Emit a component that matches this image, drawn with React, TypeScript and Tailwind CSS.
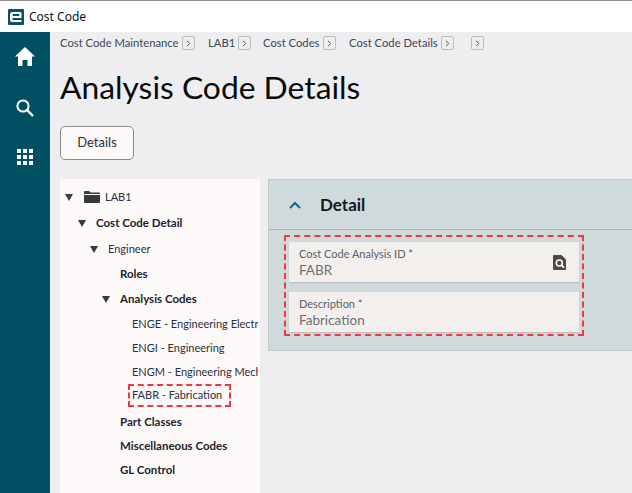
import React from 'react';

function Crumb({ label, gap }: { label: string; gap: string }) {
  return (
    <>
      <span className={`text-[11.25px] text-[#3c4650] ${gap}`}>{label}</span>
      <span className="ml-[5px] flex h-[14px] w-[13px] items-center justify-center rounded-[2px] border border-[#bcbcbc]">
        <svg width="5" height="7" viewBox="0 0 5 7" fill="none" stroke="#555" strokeWidth="1">
          <path d="M1 .8 3.8 3.5 1 6.2" />
        </svg>
      </span>
    </>
  );
}

function Caret() {
  return (
    <svg width="8" height="7" viewBox="0 0 8 7" className="shrink-0">
      <path d="M0 0h8L4 7z" fill="#3a3a3a" />
    </svg>
  );
}

function TreeRow({ height, indent, caret, bold, children }: { height: string; indent: string; caret?: boolean; bold?: boolean; children: React.ReactNode }) {
  return (
    <div className={`flex items-center overflow-hidden whitespace-nowrap ${height} ${indent} ${bold ? 'text-[11.5px] font-bold text-[#1d232b]' : 'text-[11px] text-[#2a3040]'}`}>
      {caret && <Caret />}
      {children}
    </div>
  );
}

function Field({ label, value, icon }: { label: string; value: string; icon?: boolean }) {
  return (
    <div className="flex h-10 items-center justify-between bg-[#f2efec] pl-[10px] pr-[13px] shadow-[0_1px_1px_#b9bfc1]">
      <div>
        <div className="text-[11px] leading-[15px] text-[#5c6068]">{label}</div>
        <div className="text-[13.5px] leading-[18px] text-[#6f6f6f]">{value}</div>
      </div>
      {icon && (
        <svg width="13" height="15" viewBox="0 0 13 15">
          <path d="M1 0h7.5L13 4.5V14a1 1 0 0 1-1 1H1a1 1 0 0 1-1-1V1a1 1 0 0 1 1-1z" fill="#4a4a4a" />
          <circle cx="6.3" cy="8" r="3" fill="none" stroke="#fff" strokeWidth="1.6" />
          <path d="M8.5 10.2 11 12.6" stroke="#fff" strokeWidth="1.8" />
        </svg>
      )}
    </div>
  );
}

export default function App() {
  return (
    <div className="flex h-[493px] w-[632px] flex-col overflow-hidden bg-[#eeeef0] font-['Lato','Noto_Sans',sans-serif]">
      {/* Title bar */}
      <div className="flex h-8 shrink-0 items-center border-t border-[#8c8c8c] bg-white pl-2">
        <svg width="16" height="16" viewBox="0 0 16 16">
          <rect width="16" height="16" rx="1" fill="#0b5163" />
          <path d="M4.500 3h7.500a1.500 1.500 0 0 1 1.500 1.500V9H4.500v2h9v2H4a2 2 0 0 1-2-2V5.500A2.500 2.500 0 0 1 4.500 3zm.2 2v2h6.500V5z" fill="#fff" fillRule="evenodd" />
        </svg>
        <span className="ml-[5px] font-['Noto_Sans',sans-serif] text-[12px] text-[#111]">Cost Code</span>
      </div>

      <div className="flex min-h-0 flex-1">
        {/* Side nav */}
        <div className="flex w-[50px] shrink-0 flex-col items-center bg-[#004f63]">
          <svg width="20" height="19" viewBox="0 0 20 19" className="mt-[15px]" fill="#fff">
            <path d="M10 0 20 9.500h-3V19h-4.500v-6h-5v6H3V9.500H0z" />
          </svg>
          <svg width="18" height="18" viewBox="0 0 18 18" fill="none" stroke="#fff" className="mt-[33px]">
            <circle cx="7" cy="7" r="5.600" strokeWidth="2" />
            <path d="M11 11l6 6" strokeWidth="2.400" />
          </svg>
          <div className="mt-[32px] grid grid-cols-3 gap-[2px]">
            {Array.from({ length: 9 }).map((_, i) => (
              <div key={i} className="h-[4px] w-[4px] bg-white" />
            ))}
          </div>
        </div>

        {/* Main */}
        <div className="min-w-0 flex-1">
          <div className="ml-[10px] mt-[4px] flex h-[14px] items-center whitespace-nowrap">
            <Crumb label="Cost Code Maintenance" gap="w-[117px]" />
            <Crumb label="LAB1" gap="ml-[13px] w-[25px]" />
            <Crumb label="Cost Codes" gap="ml-[12px] w-[55px]" />
            <Crumb label="Cost Code Details" gap="ml-[13px] w-[87px]" />
            <span className="ml-[17px] flex h-[14px] w-[13px] items-center justify-center rounded-[2px] border border-[#bcbcbc]">
              <svg width="5" height="7" viewBox="0 0 5 7" fill="none" stroke="#555" strokeWidth="1">
                <path d="M1 .8 3.8 3.5 1 6.2" />
              </svg>
            </span>
          </div>

          <h1 className="ml-[10px] mt-[15px] text-[31.8px] font-normal leading-[44px] text-[#0a0a0a]">Analysis Code Details</h1>

          <button className="ml-[10px] mt-[17px] block h-[34px] w-[74px] rounded-[5px] border border-[#8a8a8a] bg-[#fdf9f8] text-[13px] text-[#2a3040]">Details</button>

          <div className="ml-[10px] mt-[19px] flex items-start gap-2">
            {/* Tree */}
            <div className="h-[314px] w-[200px] shrink-0 bg-[#fdf9f8] pl-[5px] pr-[2px] pt-[5px]">
              <TreeRow height="h-[26px]" indent="ml-0" caret>
                <svg width="16" height="12" viewBox="0 0 16 12" className="ml-[11px] shrink-0" fill="#3a3a3a">
                  <path d="M0 1a1 1 0 0 1 1-1h4l1.500 1.500H15a1 1 0 0 1 1 1V3H0zM0 4h16v7a1 1 0 0 1-1 1H1a1 1 0 0 1-1-1z" />
                </svg>
                <span className="ml-[5px]">LAB1</span>
              </TreeRow>
              <TreeRow height="h-[26px]" indent="ml-[13px]" caret bold>
                <span className="ml-[10px]">Cost Code Detail</span>
              </TreeRow>
              <TreeRow height="h-[26px]" indent="ml-[25px]" caret>
                <span className="ml-[10px]">Engineer</span>
              </TreeRow>
              <TreeRow height="h-[24px]" indent="ml-[55px]" bold>Roles</TreeRow>
              <TreeRow height="h-[26px]" indent="ml-[37px]" caret bold>
                <span className="ml-[10px]">Analysis Codes</span>
              </TreeRow>
              <TreeRow height="h-[24px]" indent="ml-[67px]">ENGE - Engineering Electrical</TreeRow>
              <TreeRow height="h-[24px]" indent="ml-[67px]">ENGI - Engineering</TreeRow>
              <TreeRow height="h-[24px]" indent="ml-[67px]">ENGM - Engineering Mechanical</TreeRow>
              <div className="ml-[63px] flex h-[23px] w-[103px] items-center border-2 border-dashed border-[#f0383f] text-[11px] text-[#2a3040]">
                <span className="ml-[2px] whitespace-nowrap">FABR - Fabrication</span>
              </div>
              <TreeRow height="h-[25px] mt-[2px]" indent="ml-[55px]" bold>Part Classes</TreeRow>
              <TreeRow height="h-[24px]" indent="ml-[55px]" bold>Miscellaneous Codes</TreeRow>
              <TreeRow height="h-[24px]" indent="ml-[55px]" bold>GL Control</TreeRow>
            </div>

            {/* Detail panel */}
            <div className="h-[172px] flex-1 border border-[#c4c8c8] border-r-0 bg-[#d0dadd]">
              <div className="flex h-[50px] items-center border-b border-[#8fbcc8] pl-[20px]">
                <svg width="12" height="8" viewBox="0 0 12 8" fill="none" stroke="#0f6b8c" strokeWidth="2">
                  <path d="M1 7l5-5 5 5" />
                </svg>
                <span className="ml-[19px] text-[17px] font-bold text-[#10161c]">Detail</span>
              </div>
              <div className="ml-[15px] mt-[5px] flex h-[101px] w-[300px] flex-col gap-[10px] border-2 border-dashed border-[#f0383f] px-[3px] pt-[5px]">
                <Field label="Cost Code Analysis ID *" value="FABR" icon />
                <Field label="Description *" value="Fabrication" />
              </div>
            </div>
          </div>
        </div>
      </div>
    </div>
  );
}
